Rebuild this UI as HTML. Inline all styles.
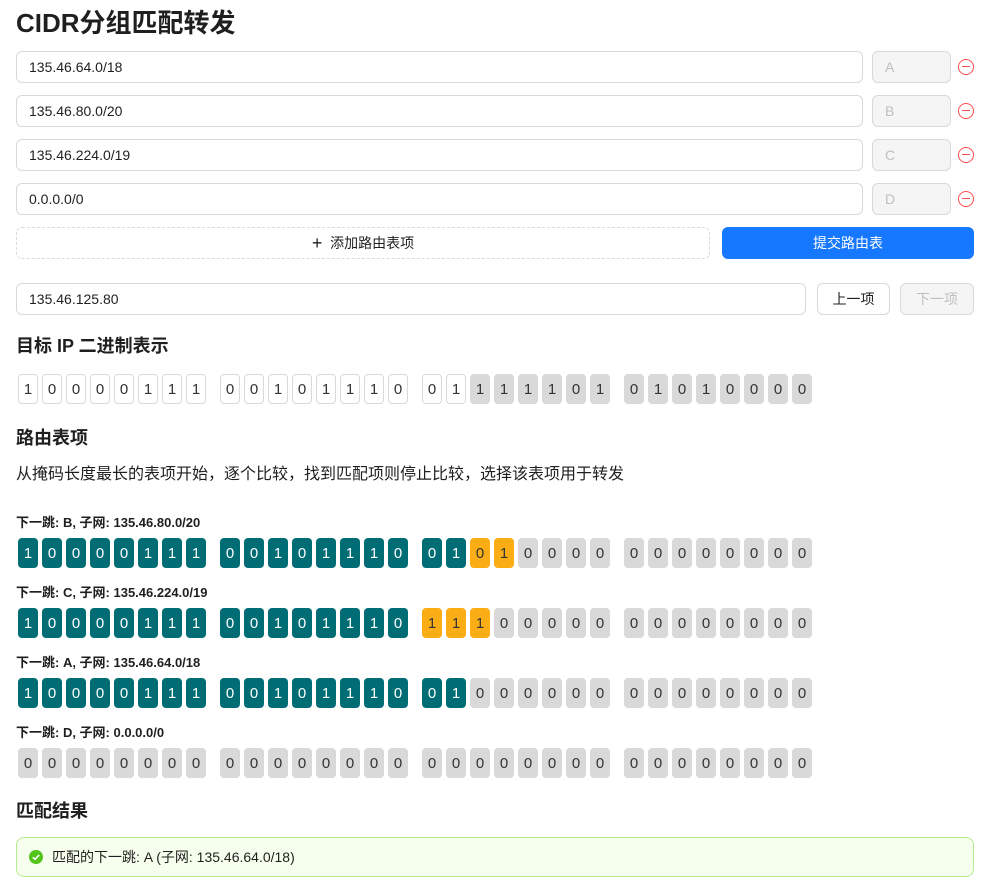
<!DOCTYPE html>
<html><head><meta charset="utf-8"><style>
*{box-sizing:border-box;margin:0;padding:0}
body{width:986px;height:886px;background:#fff;font-family:"Liberation Sans","Noto Sans CJK SC",sans-serif;color:#1f1f1f;position:relative;overflow:hidden}
.a{position:absolute}
h1{position:absolute;left:16px;top:6px;font-size:26px;font-weight:700;line-height:34px}
h3{position:absolute;left:16px;font-size:18px;font-weight:700;line-height:24px}
.in{position:absolute;height:32px;border:1px solid #d9d9d9;border-radius:6px;font-size:14px;line-height:30px;padding-left:12px;background:#fff}
.dis{background:#f5f5f5;color:#bfbfbf}
.minus{position:absolute;left:958px;width:16px;height:16px;border:1.5px solid #ff4d4f;border-radius:50%}
.minus:after{content:"";position:absolute;left:3px;right:3px;top:5.7px;height:1.5px;background:#ff4d4f}
.btn{position:absolute;height:32px;border-radius:6px;font-size:14px;line-height:30px;text-align:center;border:1px solid #d9d9d9;background:#fff}
.row{position:absolute;left:18px;display:flex;height:30px}
.row b{display:flex;font-weight:400}
.row b+b{margin-left:10px}
.row i{font-style:normal;font-weight:400;width:20px;height:30px;margin-right:4px;border-radius:4px;font-size:15px;line-height:30px;text-align:center;border:1px solid #d9d9d9;background:#fff;color:#333}
.row i.g{background:#d9d9d9;border-color:#d9d9d9}
.row i.t{background:#006d75;border-color:#006d75;color:#fff}
.row i.o{background:#faad14;border-color:#faad14;color:#333}
.lb{position:absolute;left:16px;font-size:13px;font-weight:700;line-height:16px}
</style></head><body>
<h1>CIDR分组匹配转发</h1>
<div class="in" style="left:16px;top:51px;width:847px">135.46.64.0/18</div>
<div class="in dis" style="left:872px;top:51px;width:79px">A</div><div class="minus" style="top:59px"></div>
<div class="in" style="left:16px;top:95px;width:847px">135.46.80.0/20</div>
<div class="in dis" style="left:872px;top:95px;width:79px">B</div><div class="minus" style="top:103px"></div>
<div class="in" style="left:16px;top:139px;width:847px">135.46.224.0/19</div>
<div class="in dis" style="left:872px;top:139px;width:79px">C</div><div class="minus" style="top:147px"></div>
<div class="in" style="left:16px;top:183px;width:847px">0.0.0.0/0</div>
<div class="in dis" style="left:872px;top:183px;width:79px">D</div><div class="minus" style="top:191px"></div>
<div class="btn" style="left:16px;top:227px;width:694px;border-style:dashed"><span style="font-size:18px;vertical-align:-1px">+</span>&nbsp; 添加路由表项</div>
<div class="btn" style="left:722px;top:227px;width:252px;background:#1677ff;border-color:#1677ff;color:#fff">提交路由表</div>
<div class="in" style="left:16px;top:283px;width:790px">135.46.125.80</div>
<div class="btn" style="left:817px;top:283px;width:73px">上一项</div>
<div class="btn" style="left:900px;top:283px;width:74px;background:#f5f5f5;color:#bfbfbf">下一项</div>
<h3 style="top:334px">目标 IP 二进制表示</h3>
<div class="row" style="top:374px"><b><i>1</i><i>0</i><i>0</i><i>0</i><i>0</i><i>1</i><i>1</i><i>1</i></b><b><i>0</i><i>0</i><i>1</i><i>0</i><i>1</i><i>1</i><i>1</i><i>0</i></b><b><i>0</i><i>1</i><i class="g">1</i><i class="g">1</i><i class="g">1</i><i class="g">1</i><i class="g">0</i><i class="g">1</i></b><b><i class="g">0</i><i class="g">1</i><i class="g">0</i><i class="g">1</i><i class="g">0</i><i class="g">0</i><i class="g">0</i><i class="g">0</i></b></div>
<h3 style="top:426px">路由表项</h3>
<div class="a" style="left:16px;top:464px;font-size:16px;line-height:22px">从掩码长度最长的表项开始，逐个比较，找到匹配项则停止比较，选择该表项用于转发</div>
<div class="lb" style="top:515px">下一跳: B, 子网: 135.46.80.0/20</div>
<div class="row" style="top:538px"><b><i class="t">1</i><i class="t">0</i><i class="t">0</i><i class="t">0</i><i class="t">0</i><i class="t">1</i><i class="t">1</i><i class="t">1</i></b><b><i class="t">0</i><i class="t">0</i><i class="t">1</i><i class="t">0</i><i class="t">1</i><i class="t">1</i><i class="t">1</i><i class="t">0</i></b><b><i class="t">0</i><i class="t">1</i><i class="o">0</i><i class="o">1</i><i class="g">0</i><i class="g">0</i><i class="g">0</i><i class="g">0</i></b><b><i class="g">0</i><i class="g">0</i><i class="g">0</i><i class="g">0</i><i class="g">0</i><i class="g">0</i><i class="g">0</i><i class="g">0</i></b></div>
<div class="lb" style="top:585px">下一跳: C, 子网: 135.46.224.0/19</div>
<div class="row" style="top:608px"><b><i class="t">1</i><i class="t">0</i><i class="t">0</i><i class="t">0</i><i class="t">0</i><i class="t">1</i><i class="t">1</i><i class="t">1</i></b><b><i class="t">0</i><i class="t">0</i><i class="t">1</i><i class="t">0</i><i class="t">1</i><i class="t">1</i><i class="t">1</i><i class="t">0</i></b><b><i class="o">1</i><i class="o">1</i><i class="o">1</i><i class="g">0</i><i class="g">0</i><i class="g">0</i><i class="g">0</i><i class="g">0</i></b><b><i class="g">0</i><i class="g">0</i><i class="g">0</i><i class="g">0</i><i class="g">0</i><i class="g">0</i><i class="g">0</i><i class="g">0</i></b></div>
<div class="lb" style="top:655px">下一跳: A, 子网: 135.46.64.0/18</div>
<div class="row" style="top:678px"><b><i class="t">1</i><i class="t">0</i><i class="t">0</i><i class="t">0</i><i class="t">0</i><i class="t">1</i><i class="t">1</i><i class="t">1</i></b><b><i class="t">0</i><i class="t">0</i><i class="t">1</i><i class="t">0</i><i class="t">1</i><i class="t">1</i><i class="t">1</i><i class="t">0</i></b><b><i class="t">0</i><i class="t">1</i><i class="g">0</i><i class="g">0</i><i class="g">0</i><i class="g">0</i><i class="g">0</i><i class="g">0</i></b><b><i class="g">0</i><i class="g">0</i><i class="g">0</i><i class="g">0</i><i class="g">0</i><i class="g">0</i><i class="g">0</i><i class="g">0</i></b></div>
<div class="lb" style="top:725px">下一跳: D, 子网: 0.0.0.0/0</div>
<div class="row" style="top:748px"><b><i class="g">0</i><i class="g">0</i><i class="g">0</i><i class="g">0</i><i class="g">0</i><i class="g">0</i><i class="g">0</i><i class="g">0</i></b><b><i class="g">0</i><i class="g">0</i><i class="g">0</i><i class="g">0</i><i class="g">0</i><i class="g">0</i><i class="g">0</i><i class="g">0</i></b><b><i class="g">0</i><i class="g">0</i><i class="g">0</i><i class="g">0</i><i class="g">0</i><i class="g">0</i><i class="g">0</i><i class="g">0</i></b><b><i class="g">0</i><i class="g">0</i><i class="g">0</i><i class="g">0</i><i class="g">0</i><i class="g">0</i><i class="g">0</i><i class="g">0</i></b></div>
<h3 style="top:799px">匹配结果</h3>
<div class="a" style="left:16px;top:837px;width:958px;height:40px;border:1px solid #b7eb8f;background:#f6ffed;border-radius:8px"></div>
<svg class="a" style="left:29px;top:850px" width="14" height="14" viewBox="0 0 14 14"><circle cx="7" cy="7" r="7" fill="#52c41a"/><path d="M3.8 7.2 6 9.3 10.2 4.9" stroke="#fff" stroke-width="1.6" fill="none"/></svg>
<div class="a" style="left:52px;top:847px;font-size:14px;line-height:20px">匹配的下一跳: A (子网: 135.46.64.0/18)</div>
</body></html>
